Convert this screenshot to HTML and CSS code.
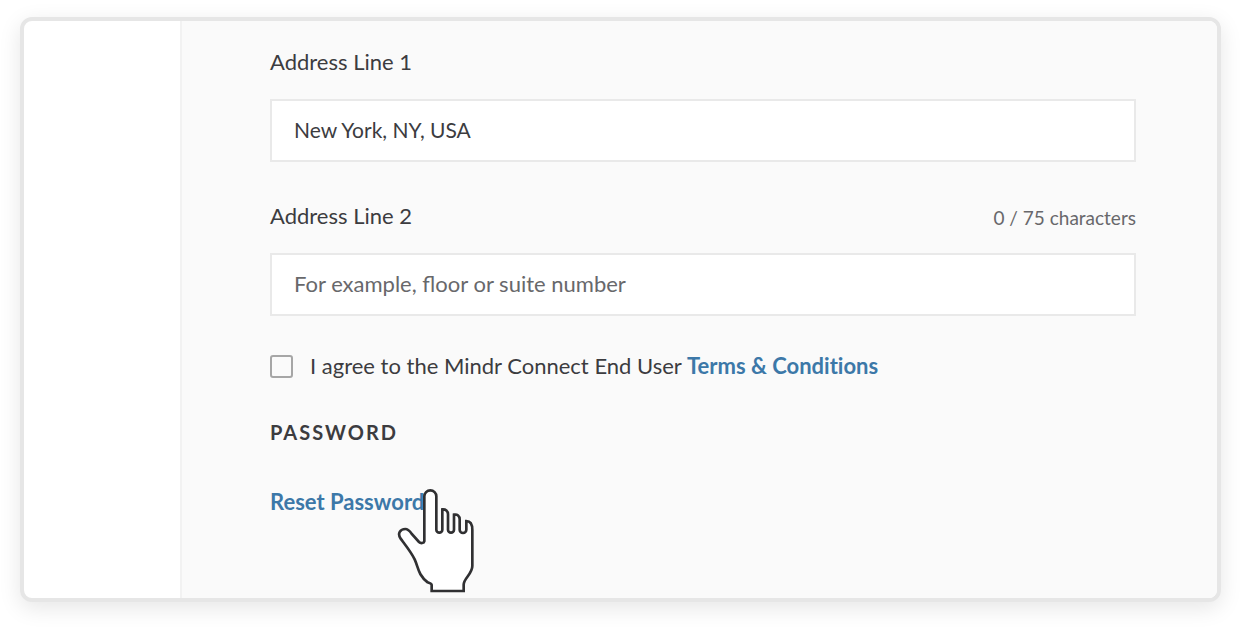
FILE: index.html
```html
<!DOCTYPE html>
<html lang="en">
<head>
<meta charset="utf-8">
<meta name="viewport" content="width=device-width, initial-scale=1">
<title>Account settings</title>
<link rel="stylesheet" href="styles.css">
</head>
<body>
<main class="frame">
  <aside class="sidebar"></aside>
  <form class="form">
    <div class="field">
      <div class="field-head"><label for="address1">Address Line 1</label></div>
      <input class="text-input" id="address1" type="text" value="New York, NY, USA">
    </div>
    <div class="field">
      <div class="field-head">
        <label for="address2">Address Line 2</label>
        <span class="counter">0 / 75 characters</span>
      </div>
      <input class="text-input" id="address2" type="text" maxlength="75" placeholder="For example, floor or suite number">
    </div>
    <div class="agree">
      <input class="checkbox" id="agree" type="checkbox">
      <label for="agree">I agree to the Mindr Connect End User <a class="link" href="#terms">Terms &amp; Conditions</a></label>
    </div>
    <h2 class="section-title">PASSWORD</h2>
    <div class="reset">
      <a class="link" href="#reset">Reset Password</a>
      <svg class="pointer" viewBox="50 54 240 318" width="80" height="106" aria-hidden="true">
        <path d="M132 214V79a18 18 0 0 1 36 0V179a9 9 0 0 0 18 0V118C196 117 203 123 203 133V179a9 9 0 0 0 18 0V134C231 132 238 138 238 148V179a10 10 0 0 0 20 0V153C269 153 276 162 276 180V288C276 312 250 325 250 344V363H154V345C154 340 147 339 142 337C113 315 114 292 103 268C93 247 76 226 61 206C50 190 60 177 75 177C83 177 88 183 93 190L116 216C121 221 131 220 132 214Z"/>
      </svg>
    </div>
  </form>
</main>
</body>
</html>
```
FILE: styles.css
```css
* {
  box-sizing: border-box;
}

body {
  margin: 0;
  padding: 17px 26px 28px 20px;
  background: #fff;
  color: #3c3c3f;
  font-family: Lato, "Liberation Sans", sans-serif;
  font-size: 22px;
  line-height: 28px;
}

.frame {
  display: flex;
  overflow: visible;
  border: 4px solid #e6e6e6;
  border-radius: 12px;
  background: #fff;
  box-shadow: 0 6px 22px rgba(0, 0, 0, 0.1);
}

.sidebar {
  flex: 0 0 156px;
}

.form {
  flex: 1;
  padding: 27px 81px 82px 88px;
  border-left: 2px solid #f2f2f2;
  border-radius: 0 8px 8px 0;
  background: #fafafa;
}

.field {
  margin-bottom: 40px;
}

.field + .field {
  margin-bottom: 36px;
}

.field-head {
  display: flex;
  justify-content: space-between;
  margin-bottom: 23px;
}

.counter {
  padding-top: 4px;
  color: #68686b;
  font-size: 19px;
  line-height: 24px;
}

.text-input {
  display: block;
  width: 100%;
  height: 63px;
  padding: 0 22px 2px;
  border: 2px solid #e9e9e9;
  border-radius: 0;
  background: #fff;
  color: #3c3c3f;
  font-family: inherit;
  font-size: 21px;
}

.text-input::placeholder {
  color: #68686b;
  font-size: 22px;
  opacity: 1;
}

.agree {
  display: flex;
  align-items: center;
  gap: 17px;
  margin-bottom: 38px;
}

.checkbox {
  appearance: none;
  width: 23px;
  height: 23px;
  margin: 0;
  border: 2px solid #a6a6a6;
  border-radius: 3px;
  background: #fafafa;
}

.checkbox:checked {
  background: #3c78a8;
}

.link {
  color: #3c78a8;
  font-weight: 700;
  font-variant-ligatures: none;
  text-decoration: none;
}

.section-title {
  margin: 0 0 42px;
  font-size: 20px;
  font-weight: 700;
  line-height: 28px;
  letter-spacing: 2px;
}

.reset {
  position: relative;
}

.pointer {
  position: absolute;
  top: 0;
  left: 127px;
  fill: #fff;
  stroke: #303032;
  stroke-width: 8;
  overflow: visible;
}
```
